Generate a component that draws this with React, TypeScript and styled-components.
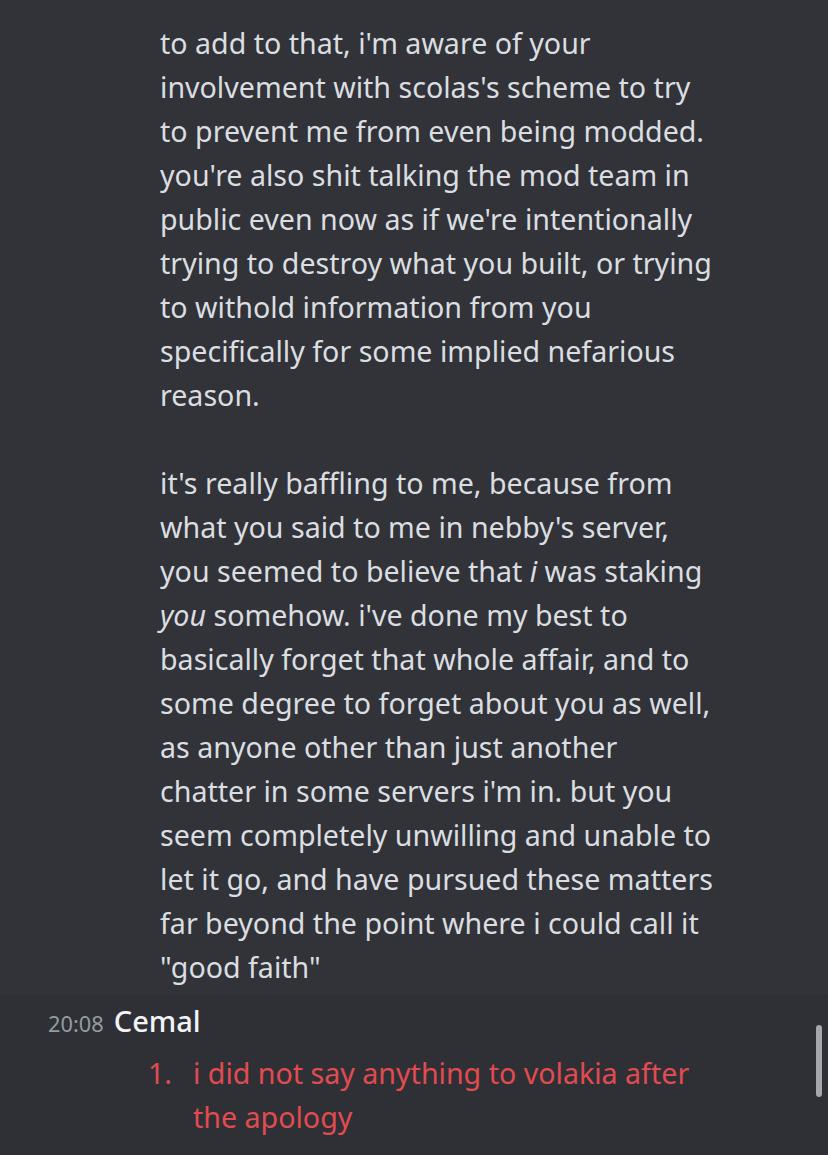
import React from "react";
import styled, { createGlobalStyle } from "styled-components";

const Global = createGlobalStyle`
  html, body { margin: 0; padding: 0; background: #313338; }
  body { width: 828px; height: 1155px; overflow: hidden; }
`;

const Page = styled.div`
  width: 828px;
  height: 1155px;
  background: #313338;
  font-family: "Noto Sans", "Open Sans", sans-serif;
  display: flex;
  flex-direction: column;
  position: relative;
  overflow: hidden;
`;

const Continuation = styled.div`
  padding: 21px 0 6px 160px;
`;

const Line = styled.div`
  font-size: 28.6px;
  line-height: 44px;
  height: 44px;
  color: #dbdee1;
  white-space: nowrap;
`;

const Group = styled.div`
  background: #2e3035;
  flex: 1;
`;

const Header = styled.div`
  display: flex;
  align-items: baseline;
  gap: 10px;
  padding-left: 48px;
  height: 52px;
  line-height: 52px;
`;

const Time = styled.span`
  font-size: 21.8px;
  color: #949ba4;
`;

const Name = styled.span`
  font-size: 29px;
  color: #f2f3f5;
  font-weight: 500;
`;

const List = styled.ol`
  margin: 0;
  padding: 4px 0 0 148px;
  list-style: none;
`;

const Item = styled.li`
  display: grid;
  grid-template-columns: 45px auto;
  color: #e24b50;
  font-size: 28.6px;
  line-height: 44px;
`;

const Scrollbar = styled.div`
  position: absolute;
  right: 6px;
  top: 1025px;
  width: 6px;
  height: 72px;
  border-radius: 3px;
  background: #a4a8ad;
`;

const lines: React.ReactNode[] = [
  "to add to that, i'm aware of your",
  "involvement with scolas's scheme to try",
  "to prevent me from even being modded.",
  "you're also shit talking the mod team in",
  "public even now as if we're intentionally",
  "trying to destroy what you built, or trying",
  "to withold information from you",
  "specifically for some implied nefarious",
  "reason.",
  "",
  "it's really baffling to me, because from",
  "what you said to me in nebby's server,",
  <>you seemed to believe that <em>i</em> was staking</>,
  <><em>you</em> somehow. i've done my best to</>,
  "basically forget that whole affair, and to",
  "some degree to forget about you as well,",
  "as anyone other than just another",
  "chatter in some servers i'm in. but you",
  "seem completely unwilling and unable to",
  "let it go, and have pursued these matters",
  "far beyond the point where i could call it",
  "\"good faith\"",
];

export default function App() {
  return (
    <Page>
      <Global />
      <Continuation>
        {lines.map((l, i) => (
          <Line key={i}>{l}</Line>
        ))}
      </Continuation>
      <Group>
        <Header>
          <Time>20:08</Time>
          <Name>Cemal</Name>
        </Header>
        <List>
          <Item>
            <span>1.</span>
            <span>
              i did not say anything to volakia after
              <br />
              the apology
            </span>
          </Item>
        </List>
      </Group>
      <Scrollbar />
    </Page>
  );
}
